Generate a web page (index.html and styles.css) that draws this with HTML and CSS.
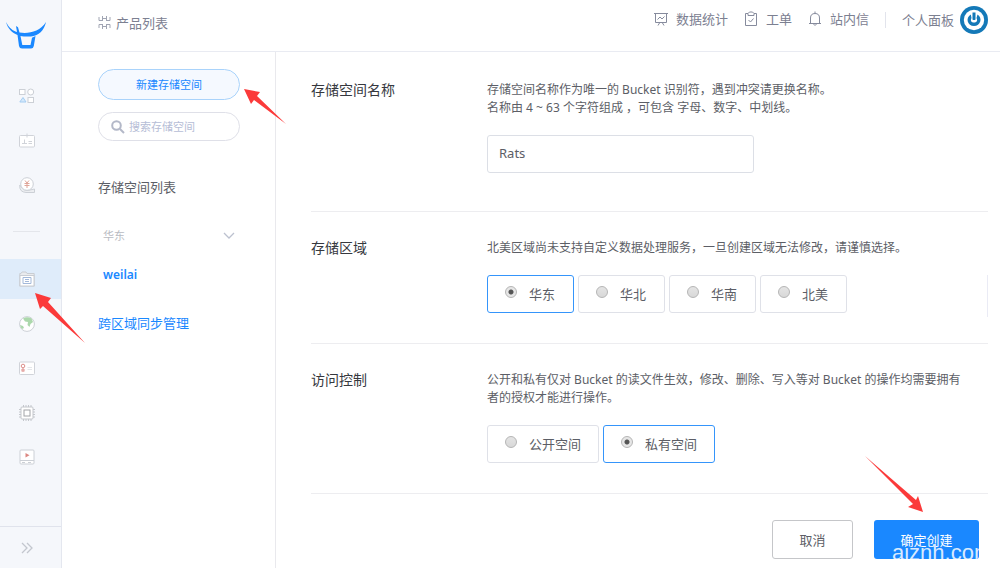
FILE: index.html
```html
<!DOCTYPE html>
<html lang="zh-CN">
<head>
<meta charset="utf-8">
<meta name="viewport" content="width=device-width, initial-scale=1">
<title>新建存储空间</title>
<link rel="stylesheet" href="styles.css">
</head>
<body>
<div class="app">
  <aside class="rail">
    <a class="logo" href="#" aria-label="首页">
      <svg width="40" height="28" viewBox="0 0 40 28" fill="#1a88ff"><path d="M0 0C3 6 7 8.800 11 10L10 4L12 5.200L13.500 10.500C22 12 34 10 40 0C38 9 32 14 25 14.500C21 14.800 17 14.500 14.500 14L16.300 23H24.500L26 15.800L29.500 14L27.800 24Q27.300 26.500 25 26.500H16Q13.500 26.500 13 24L11.500 13C6 10.500 2 7 0 0Z"/></svg>
    </a>
    <nav class="rail-group rail-top">
      <a class="rail-item" href="#" aria-label="产品">
        <svg width="16" height="16" viewBox="0 0 16 16" fill="#fff" stroke="#ccd0d6"><rect x=".5" y="1.500" width="5.500" height="5"/><circle cx="11.700" cy="4" r="3"/><path d="M.8 14L4 9.500L7 14Z" stroke="#a4cdf2" fill="#d5e9fb"/><rect x="9" y="9.500" width="5.500" height="5"/></svg>
      </a>
      <a class="rail-item" href="#" aria-label="账户">
        <svg width="16" height="16" viewBox="0 0 16 16" fill="none" stroke="#d0d3d9"><rect x=".5" y="2.500" width="15" height="11.500" rx="1" fill="#fff"/><path d="M8 .5V4.500M3 10.500H8M5.500 6.500V10.500M9.500 8.500H13M9.500 10.500H13"/></svg>
      </a>
      <a class="rail-item" href="#" aria-label="财务">
        <svg width="16" height="16" viewBox="0 0 16 16" fill="#fff" stroke="#ccd0d6"><path d="M.8 8Q0 15 7 15.500H15.500V12L11 13Q5 15 .8 8Z" fill="#eceef1"/><circle cx="8" cy="7" r="6.300"/><path d="M6 3.500L8 6L10 3.500M5.500 6.500H10.500M5.500 8.500H10.500M8 6V11" stroke="#e0a598" fill="none"/></svg>
      </a>
    </nav>
    <hr class="rail-rule">
    <nav class="rail-group rail-main">
      <a class="rail-item active" href="#" aria-label="对象存储">
        <svg width="16" height="16" viewBox="0 0 16 16" fill="#fff" stroke="#c9cdd3"><path d="M.8 15V2.500H2L3 1H7L8 2.500H15.200V15Z" fill="#e9ebee"/><rect x="1" y="4.500" width="14" height="10.500"/><path d="M4 6.500H12V12.500H4ZM6 8.500H10M6 10.500H10" stroke="#a3b9da"/></svg>
      </a>
      <a class="rail-item" href="#" aria-label="CDN">
        <svg width="16" height="16" viewBox="0 0 16 16"><circle cx="8" cy="8" r="7.400" fill="#fff" stroke="#ccd0d6"/><path d="M4 2.500Q8 0 12.500 2.500L14 6L11.500 8L10.500 11L8.500 9L9 6L6 5.500ZM1 9L4 10L5 12L3 13Q1.500 11.500 1 9Z" fill="#acd8ac"/></svg>
      </a>
      <a class="rail-item" href="#" aria-label="证书">
        <svg width="16" height="16" viewBox="0 0 16 16" fill="none"><rect x=".5" y="2" width="15" height="12.500" rx="1" fill="#fff" stroke="#d0d3d9"/><circle cx="4" cy="6" r="1.800" stroke="#dd8f8c"/><path d="M4 8V12M3 9V11.500M5 9V11.500" stroke="#dd8f8c"/><path d="M8.500 7.500H13M8.500 9.500H13" stroke="#e4e6ea"/></svg>
      </a>
      <a class="rail-item" href="#" aria-label="主机">
        <svg width="16" height="16" viewBox="0 0 16 16" fill="none" stroke="#c4c7cc"><path d="M4.500 0V16M7 0V16M9.500 0V16M12 0V16M0 4.500H16M0 7H16M0 9.500H16M0 12H16"/><rect x="2" y="2" width="12" height="12" rx="1" fill="#fff"/><rect x="5" y="5" width="6" height="6" stroke="#a2a4a8"/></svg>
      </a>
      <a class="rail-item" href="#" aria-label="视频">
        <svg width="16" height="16" viewBox="0 0 16 16" fill="none" stroke="#ccd0d6"><rect x="1" y="1" width="14" height="14" rx="1" fill="#fff"/><path d="M1 11.500H15M3 13.500H6M9 13.500H12"/><path d="M6.500 4L10.500 6.300L6.500 8.500Z" fill="#dc8781" stroke="none"/></svg>
      </a>
    </nav>
    <button class="rail-toggle" type="button" aria-label="展开">
      <svg width="12" height="12" viewBox="0 0 12 12" fill="none" stroke="#c3c7ce" stroke-width="1.300"><path d="M1 1L6 6L1 11M6 1L11 6L6 11"/></svg>
    </button>
  </aside>

  <div class="page">
    <header class="topbar">
      <a class="crumb" href="#">
        <svg width="13" height="13" viewBox="0 0 13 13" fill="none" stroke="#a1a5b3"><path d="M1 1V4.500M1 4.500H4.500M4.500 0V5M8.500 0V5M8.500 4.500H12M12 1V4.500M1 12V8.500M1 8.500H4.500M4.500 8V13M8.500 8V13M8.500 8.500H12M12 12V8.500M4.500 2.500H8.500M4.500 10.500H8.500"/></svg>
        产品列表
      </a>
      <nav class="tools">
        <a class="tool" href="#">
          <svg width="14" height="14" viewBox="0 0 14 14" fill="none" stroke="#868b9d"><path d="M0 1.500H14M1.500 1.500V10.500H12.500V1.500M3.500 7.500L6 5L8 7L10.500 4.500M5.500 11L4 13.500M8.500 11L10 13.500"/></svg>
          数据统计
        </a>
        <a class="tool" href="#">
          <svg width="14" height="16" viewBox="0 0 14 16" fill="none" stroke="#868b9d"><path d="M4 2.500H1.500V14.500H12.500V2.500H10M4 4.500V2.500L5.500 1H8.500L10 2.500V4.500ZM4.500 9L6.500 11L9.500 7.500"/></svg>
          工单
        </a>
        <a class="tool" href="#">
          <svg width="14" height="16" viewBox="0 0 14 16" fill="none" stroke="#868b9d"><path d="M1 12.500H13M2.500 12V7Q2.500 2.500 7 2.500Q11.500 2.500 11.500 7V12M7 .5V2.500M5.500 13Q7 16 8.500 13"/></svg>
          站内信
        </a>
        <span class="tool-rule"></span>
        <a class="user" href="#">
          个人面板
          <svg width="28" height="28" viewBox="0 0 28 28" fill="none"><circle cx="14" cy="14" r="14" fill="#1479b8"/><circle cx="14" cy="14" r="10.200" fill="#fff"/><path d="M10.800 8.500C5 12 7.500 20 14 20C20.500 20 23 12 17.500 8.500L16.500 12C18 15 16.500 16.500 14 16.500C11.500 16.500 10 15 11.500 12Z" fill="#1479b8"/><path d="M12.500 6.500H15.500V13.500Q14 14.500 12.500 13.500Z" fill="#1479b8"/></svg>
        </a>
      </nav>
    </header>

    <div class="columns">
      <aside class="buckets">
        <button class="new-bucket" type="button">新建存储空间</button>
        <label class="search">
          <svg width="14" height="14" viewBox="0 0 14 14" fill="none" stroke="#b3b8c8" stroke-width="2"><circle cx="5.500" cy="5.500" r="4.300"/><path d="M9 9L13 13"/></svg>
          <input type="search" placeholder="搜索存储空间" aria-label="搜索存储空间">
        </label>
        <h2 class="list-title">存储空间列表</h2>
        <button class="region-toggle" type="button">
          华东
          <svg width="12" height="8" viewBox="0 0 12 8" fill="none" stroke="#bcc1cf" stroke-width="1.300"><path d="M1 1L6 6L11 1"/></svg>
        </button>
        <a class="bucket-link" href="#">weilai</a>
        <a class="sync-link" href="#">跨区域同步管理</a>
      </aside>

      <main class="content">
        <form class="form">
          <section class="row row-name">
            <label class="row-title" for="bucket-name">存储空间名称</label>
            <div class="row-body">
              <p class="hint">存储空间名称作为唯一的 Bucket 识别符，遇到冲突请更换名称。<br>名称由 4 ~ 63 个字符组成 ，可包含 字母、数字、中划线。</p>
              <input class="name-input" id="bucket-name" type="text" value="Rats">
            </div>
          </section>
          <section class="row">
            <h2 class="row-title">存储区域</h2>
            <div class="row-body">
              <p class="hint">北美区域尚未支持自定义数据处理服务，一旦创建区域无法修改，请谨慎选择。</p>
              <div class="options regions">
                <label class="option"><input type="radio" name="region" checked>华东</label>
                <label class="option"><input type="radio" name="region">华北</label>
                <label class="option"><input type="radio" name="region">华南</label>
                <label class="option"><input type="radio" name="region">北美</label>
              </div>
            </div>
          </section>
          <section class="row">
            <h2 class="row-title">访问控制</h2>
            <div class="row-body">
              <p class="hint">公开和私有仅对 Bucket 的读文件生效，修改、删除、写入等对 Bucket 的操作均需要拥有<br>者的授权才能进行操作。</p>
              <div class="options">
                <label class="option"><input type="radio" name="access">公开空间</label>
                <label class="option"><input type="radio" name="access" checked>私有空间</label>
              </div>
            </div>
          </section>
          <div class="actions">
            <button class="btn" type="button">取消</button>
            <button class="btn primary" type="submit">确定创建<span class="watermark">aiznh.com</span></button>
          </div>
        </form>
      </main>
    </div>
  </div>

  <svg class="arrow arrow-rail" width="50" height="50" viewBox="0 0 50 50" fill="#fb3a3a"><path d="M0 0L16 5L13 9L50 50L8 13L5 16Z"/></svg>
  <svg class="arrow arrow-new" width="42" height="35" viewBox="0 0 42 35" fill="#fb3a3a"><path d="M0 0L16 3L13 7L42 35L10 11L7 15Z"/></svg>
  <svg class="arrow arrow-submit" width="58" height="56" viewBox="0 0 58 56" fill="#fb3a3a"><path d="M58 56L43 51L48 48L0 0L51 44L53 40Z"/></svg>
</div>
</body>
</html>
```
FILE: styles.css
```css
* {
  box-sizing: border-box;
}

body {
  margin: 0;
  background: #fff;
  color: #5c5e66;
  font-family: "Noto Sans", "Noto Sans CJK SC", sans-serif;
  font-size: 13px;
  line-height: 18px;
}

a {
  color: inherit;
  text-decoration: none;
}

button,
input {
  font: inherit;
  color: inherit;
}

button {
  padding: 0;
  cursor: pointer;
}

h2,
p {
  margin: 0;
}

svg {
  flex: none;
  display: block;
}

.app {
  position: relative;
  display: flex;
  min-height: 100vh;
  overflow: hidden;
}

/* Icon rail */
.rail {
  display: flex;
  flex-direction: column;
  flex: none;
  width: 62px;
  background: #f5f7fb;
  border-right: 1px solid #e4e7ef;
}

.logo {
  padding: 22px 0 0 6px;
  height: 76px;
}

.rail-group {
  display: flex;
  flex-direction: column;
  justify-content: space-between;
}

.rail-top {
  height: 129px;
}

.rail-main {
  height: 218px;
}

.rail-item {
  display: flex;
  align-items: center;
  height: 40px;
  padding-left: 19px;
}

.rail-item.active {
  background: #dfecfa;
}

.rail-rule {
  width: 27px;
  margin: 26px 0 27px 13px;
  border: 0;
  border-top: 1px solid #e4e6eb;
}

.rail-toggle {
  display: flex;
  align-items: center;
  height: 42px;
  margin-top: auto;
  padding-left: 21px;
  border: 0;
  border-top: 1px solid #e0e3ec;
  background: none;
}

/* Top bar */
.page {
  display: flex;
  flex-direction: column;
  flex: 1;
  min-width: 0;
}

.topbar {
  display: flex;
  justify-content: space-between;
  height: 52px;
  padding: 0 12px 0 36px;
  border-bottom: 1px solid #e9ebf2;
  color: #7c8091;
}

.crumb {
  display: flex;
  align-items: center;
  gap: 5px;
  height: 45px;
}

.tools {
  display: flex;
  align-items: center;
  gap: 16px;
  height: 40px;
}

.tool {
  display: flex;
  align-items: center;
  gap: 8px;
  padding-bottom: 2px;
}

.tool-rule {
  width: 1px;
  height: 16px;
  background: #e2e4ec;
}

.user {
  display: flex;
  align-items: center;
  gap: 6px;
}

/* Bucket list */
.columns {
  display: flex;
  flex: 1;
}

.buckets {
  display: flex;
  flex-direction: column;
  flex: none;
  width: 214px;
  padding: 17px 35px 0 36px;
  border-right: 1px solid #e9e9ed;
}

.new-bucket {
  height: 31px;
  border: 1px solid #a9d3fb;
  border-radius: 16px;
  background: #f5f9ff;
  color: #1a88ff;
  font-size: 11px;
}

.search {
  display: flex;
  align-items: center;
  gap: 4px;
  height: 29px;
  margin-top: 12px;
  padding: 0 12px;
  border: 1px solid #dfe0e8;
  border-radius: 15px;
}

.search input {
  flex: 1;
  min-width: 0;
  padding: 0;
  border: 0;
  outline: 0;
  background: none;
  font-size: 11px;
}

.search input::placeholder {
  color: #b6bdd6;
  opacity: 1;
}

.list-title {
  margin-top: 37px;
  font-size: 13px;
  font-weight: 400;
}

.region-toggle {
  display: flex;
  align-items: center;
  justify-content: space-between;
  margin-top: 31px;
  padding: 0 5px;
  border: 0;
  background: none;
  color: #b9bbc2;
  font-size: 11px;
}

.bucket-link {
  margin: 21px 5px 0;
  color: #1a88ff;
  font-size: 12px;
  font-weight: 600;
}

.sync-link {
  margin-top: 30px;
  color: #1a88ff;
}

/* Form */
.content {
  flex: 1;
  min-width: 0;
  padding: 0 12px 0 35px;
}

.row {
  display: flex;
  padding: 27px 0 30px;
  border-bottom: 1px solid #ededf0;
}

.row-name {
  padding: 29px 0 38px;
}

.row-title {
  flex: none;
  width: 176px;
  color: #36383e;
  font-size: 14px;
  font-weight: 400;
}

.row-body {
  flex: 1;
  min-width: 0;
}

.hint {
  margin-bottom: 18px;
  font-size: 12px;
}

.name-input {
  display: block;
  width: 267px;
  height: 38px;
  padding: 0 11px 2px;
  border: 1px solid #dcdfe6;
  border-radius: 3px;
  background: #fff;
}

.options {
  display: flex;
  align-items: flex-start;
  gap: 4px;
}

.regions {
  height: 42px;
  margin-bottom: -4px;
  border-right: 1px solid #eaebf5;
}

.option {
  display: flex;
  align-items: center;
  gap: 12px;
  min-width: 87px;
  height: 38px;
  padding: 0 17px;
  border: 1px solid #dfe1e8;
  border-radius: 3px;
}

.option:has(input:checked) {
  border-color: #3595fb;
}

.option input {
  appearance: none;
  width: 12px;
  height: 12px;
  margin: 0 0 4px;
  border: 1px solid #b5b5b5;
  border-radius: 50%;
  background: linear-gradient(#e4e4e4, #d8d8d8);
}

.option input:checked {
  background: radial-gradient(circle, #555 0 2px, #e6e6e6 3px);
}

.actions {
  display: flex;
  justify-content: flex-end;
  gap: 21px;
  padding: 26px 9px 9px 0;
}

.btn {
  width: 81px;
  height: 39px;
  border: 1px solid #c5c6c9;
  border-radius: 3px;
  background: #fff;
}

.btn.primary {
  position: relative;
  width: 105px;
  overflow: hidden;
  border: 0;
  background: #1a88ff;
  color: #fff;
}

.watermark {
  position: absolute;
  top: 21px;
  left: 18px;
  color: #d8eaff;
  font-family: "Liberation Sans", sans-serif;
  font-size: 22px;
  line-height: 24px;
}

/* Pointer arrows over the page */
.arrow {
  position: absolute;
  pointer-events: none;
}

.arrow-rail {
  top: 293px;
  left: 35px;
}

.arrow-new {
  top: 89px;
  left: 244px;
}

.arrow-submit {
  top: 456px;
  left: 865px;
}
```
